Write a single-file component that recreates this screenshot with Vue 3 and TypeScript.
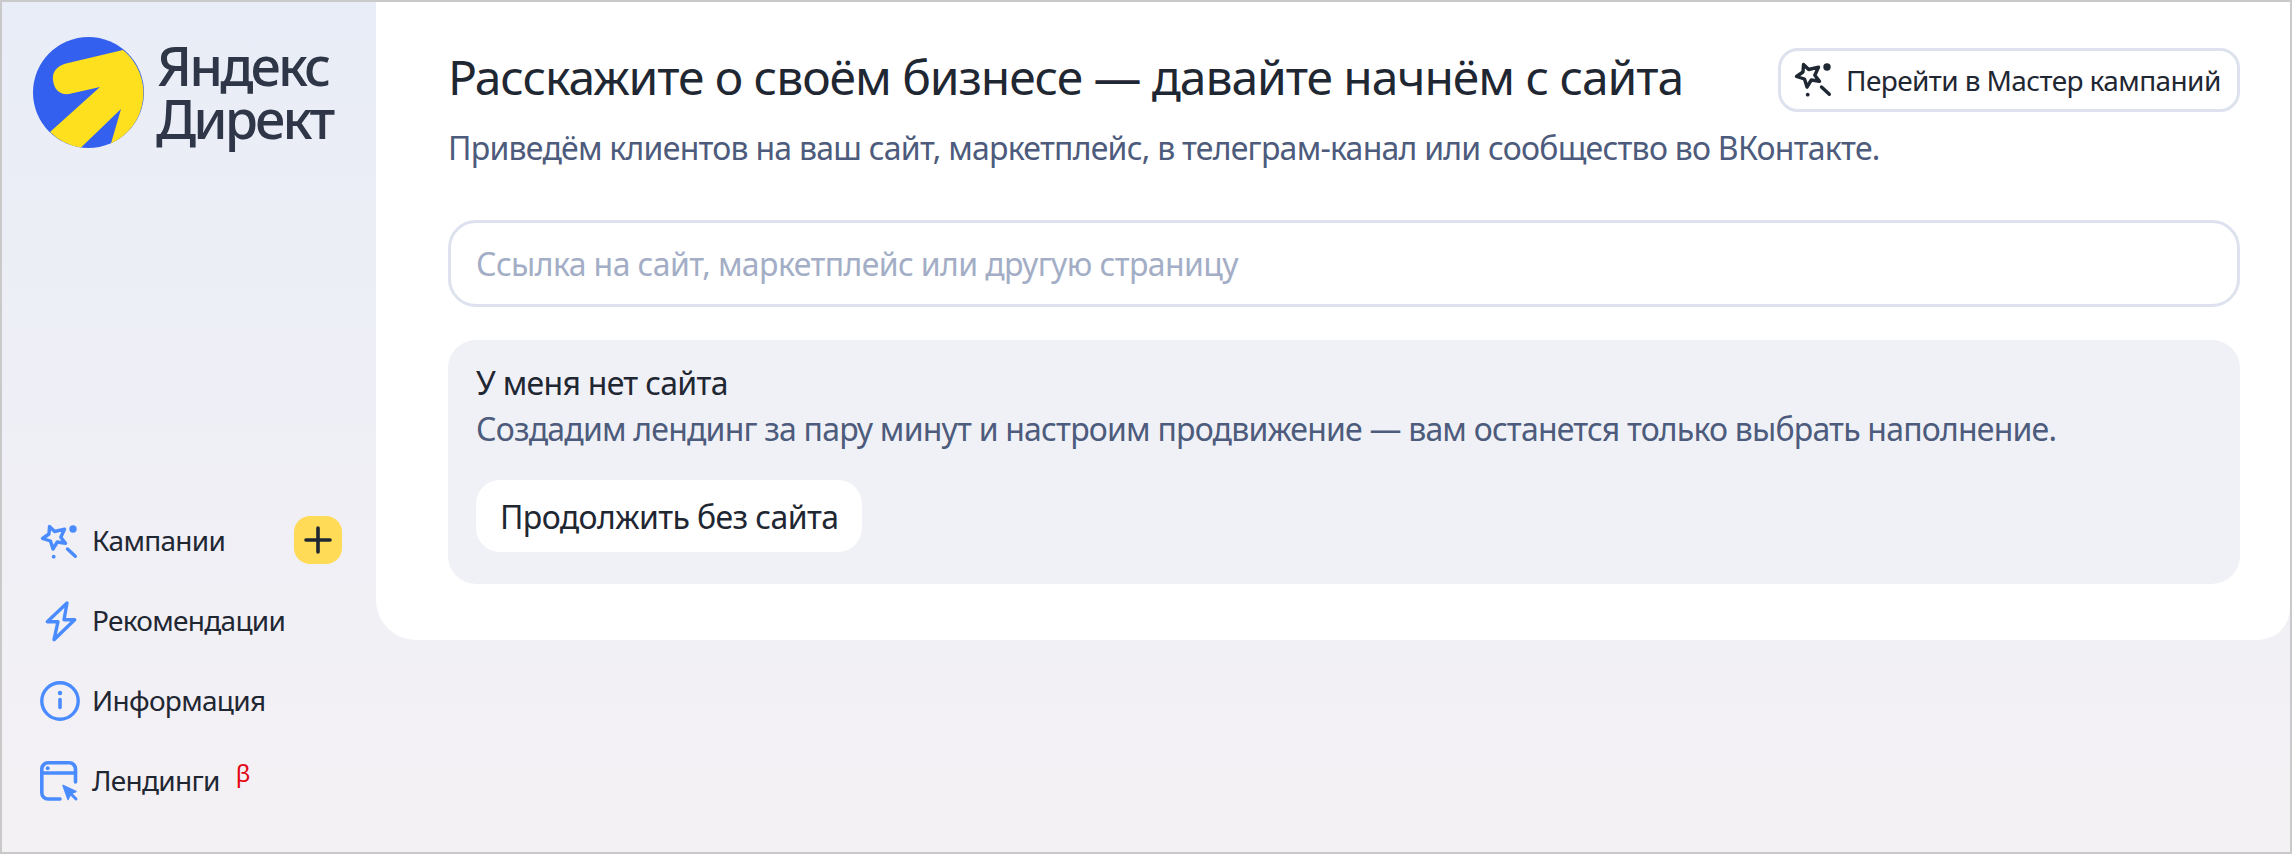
<script setup lang="ts">
interface NavItem {
  label: string;
  icon: 'wand' | 'bolt' | 'info' | 'landing';
  add?: boolean;
  beta?: boolean;
}

const navItems: NavItem[] = [
  { label: 'Кампании', icon: 'wand', add: true },
  { label: 'Рекомендации', icon: 'bolt' },
  { label: 'Информация', icon: 'info' },
  { label: 'Лендинги', icon: 'landing', beta: true },
];

const starPath = 'M11.5 7.5 L16.7 12.5 L26.5 10.2 L22.8 18.3 L27.5 24.3 L19.3 23 L15 30 L12.5 22 L4.5 19.5 L11 15 Z';
</script>

<template>
  <div class="frame">
    <aside class="sidebar">
      <div class="logo">
        <svg class="logo-mark" width="112" height="112" viewBox="33 37 112 112">
          <circle cx="88.5" cy="92.5" r="55.5" fill="#3360ee" />
          <path
            d="M123 50 L66 63.5 C57 66 52 72 53 80 C54 90 60 95 69 94 L100 87 L50 132 A55.5 55.5 0 0 0 81 147.5 L121 109 L111 143.5 A55.5 55.5 0 0 0 123 50 Z"
            fill="#ffe01f"
          />
        </svg>
        <div class="logo-text">
          <div>Яндекс</div>
          <div class="logo-second">Директ</div>
        </div>
      </div>

      <nav class="nav">
        <div v-for="item in navItems" :key="item.label" class="nav-item">
          <span class="nav-icon">
            <svg v-if="item.icon === 'wand'" width="46" height="46" viewBox="0 -2 46 46" fill="none" stroke="#4a8cff" stroke-width="3.4" stroke-linejoin="round" stroke-linecap="round">
              <path :d="starPath" />
              <circle cx="35" cy="10" r="3.7" fill="#4a8cff" stroke="none" />
              <circle cx="15.7" cy="37.7" r="1.9" fill="#4a8cff" stroke="none" />
              <path d="M29.5 30 L37.3 37.3" />
            </svg>
            <svg v-else-if="item.icon === 'bolt'" width="46" height="46" viewBox="0 -2 46 46" fill="none" stroke="#4a8cff" stroke-width="3.4" stroke-linejoin="round">
              <path d="M29 4 L9.3 22.7 L20 22.7 L16 40.7 L36.7 20.7 L26 20.7 Z" />
            </svg>
            <svg v-else-if="item.icon === 'info'" width="46" height="46" viewBox="0 0 46 46" fill="none" stroke="#4a8cff" stroke-width="3.4" stroke-linecap="round">
              <circle cx="22" cy="24" r="18.2" />
              <path d="M22 22.5 L22 30.5" stroke-width="3.6" />
              <circle cx="22" cy="16" r="2.2" fill="#4a8cff" stroke="none" />
            </svg>
            <svg v-else width="46" height="46" viewBox="0 0 46 46" fill="none" stroke="#4a8cff" stroke-width="3.6" stroke-linecap="round" stroke-linejoin="round">
              <path d="M22 42 L10 42 A6.2 6.2 0 0 1 3.8 35.8 L3.8 12 A6.2 6.2 0 0 1 10 5.8 L31.3 5.8 A6.2 6.2 0 0 1 37.5 12 L37.5 25" />
              <path d="M3.8 16 L37.5 16" />
              <circle cx="9.7" cy="11.2" r="2" fill="#4a8cff" stroke="none" />
              <path d="M25 28.5 L38 34.5 L33 36.5 L30 42.5 Z" fill="#4a8cff" stroke-width="1.4" />
              <path d="M33 37 L38 42" stroke-width="3" />
            </svg>
          </span>
          <span class="nav-label">{{ item.label }}</span>
          <sup v-if="item.beta" class="beta">β</sup>
          <span v-if="item.add" class="add-btn">
            <svg width="28" height="28" viewBox="0 0 28 28" stroke="#1f2733" stroke-width="3.6" stroke-linecap="round">
              <path d="M14 2 L14 26 M2 14 L26 14" />
            </svg>
          </span>
        </div>
      </nav>
    </aside>

    <main class="main">
      <section class="card">
        <header class="head">
          <h1 class="title">Расскажите о своём бизнесе — давайте начнём с сайта</h1>
          <button class="master-btn">
            <svg width="46" height="46" viewBox="0 0 46 46" fill="none" stroke="#1f2733" stroke-width="3.4" stroke-linejoin="round" stroke-linecap="round">
              <path :d="starPath" />
              <circle cx="35" cy="10" r="3.7" fill="#1f2733" stroke="none" />
              <circle cx="15.7" cy="37.7" r="1.9" fill="#1f2733" stroke="none" />
              <path d="M29.5 30 L37.3 37.3" />
            </svg>
            Перейти в Мастер кампаний
          </button>
        </header>
        <p class="subtitle">Приведём клиентов на ваш сайт, маркетплейс, в телеграм-канал или сообщество во ВКонтакте.</p>

        <input class="link-input" type="text" placeholder="Ссылка на сайт, маркетплейс или другую страницу" />

        <div class="no-site">
          <div class="no-site-title">У меня нет сайта</div>
          <div class="no-site-text">Создадим лендинг за пару минут и настроим продвижение — вам останется только выбрать наполнение.</div>
          <button class="continue-btn">Продолжить без сайта</button>
        </div>
      </section>
    </main>
  </div>
</template>

<style>
html, body {
  margin: 0;
}
</style>

<style scoped>
.frame {
  box-sizing: border-box;
  display: flex;
  height: 854px;
  border: 2px solid #c9c9c9;
  background: linear-gradient(180deg, #e9edf7 0%, #f4f1f4 100%);
  font-family: "Noto Sans", sans-serif;
  color: #1f2733;
  overflow: hidden;
}

.sidebar {
  flex: 0 0 374px;
  display: flex;
  flex-direction: column;
  justify-content: space-between;
}

.logo {
  display: flex;
  align-items: flex-start;
  gap: 12px;
  padding: 35px 0 0 31px;
}

.logo-text {
  margin-top: 2px;
  font-size: 54px;
  line-height: 53px;
  font-weight: 500;
  letter-spacing: -2.9px;
  color: #2e3648;
}

.logo-second {
  margin-left: -1px;
}

.nav {
  display: flex;
  flex-direction: column;
  padding: 0 0 32px 36px;
}

.nav-item {
  display: flex;
  align-items: center;
  height: 80px;
  font-size: 28px;
  letter-spacing: -0.7px;
}

.nav-icon {
  flex: 0 0 54px;
  display: flex;
  align-items: center;
}

.beta {
  margin: -14px 0 0 16px;
  font-size: 24px;
  line-height: 1;
  color: #e30613;
}

.add-btn {
  display: flex;
  align-items: center;
  justify-content: center;
  width: 48px;
  height: 48px;
  margin-left: auto;
  margin-right: 34px;
  border-radius: 16px;
  background: #ffdb58;
}

.main {
  flex: 1;
}

.card {
  box-sizing: border-box;
  display: flex;
  flex-direction: column;
  height: 638px;
  padding: 46px 50px 0 72px;
  background: #fff;
  border-radius: 0 0 32px 40px;
}

.head {
  display: flex;
  justify-content: space-between;
  align-items: flex-start;
}

.title {
  margin: -3px 0 0;
  font-size: 48px;
  line-height: 64px;
  font-weight: 400;
  letter-spacing: -1.08px;
  color: #1f2733;
}

.subtitle {
  margin: 16px 0 0;
  font-size: 32px;
  line-height: 40px;
  letter-spacing: -0.75px;
  color: #4d5b7c;
  white-space: nowrap;
}

.master-btn {
  display: flex;
  align-items: center;
  gap: 8px;
  box-sizing: border-box;
  width: 462px;
  height: 64px;
  padding: 0 15px 0 11px;
  background: #fff;
  border: 3px solid #dde2ee;
  border-radius: 20px;
  font: inherit;
  font-size: 28px;
  letter-spacing: -0.6px;
  color: #1f2733;
  white-space: nowrap;
  flex: none;
}

.link-input {
  box-sizing: border-box;
  width: 100%;
  height: 87px;
  margin-top: 52px;
  padding: 0 25px;
  border: 3px solid #dde2ee;
  border-radius: 28px;
  font: inherit;
  font-size: 32px;
  letter-spacing: -0.6px;
  outline: none;
}

.link-input::placeholder {
  color: #a3aec6;
}

.no-site {
  box-sizing: border-box;
  height: 244px;
  margin-top: 33px;
  padding: 23px 28px;
  background: #f0f1f6;
  border-radius: 28px;
}

.no-site-title {
  font-size: 32px;
  line-height: 40px;
  letter-spacing: -0.7px;
}

.no-site-text {
  margin-top: 6px;
  font-size: 32px;
  line-height: 40px;
  letter-spacing: -0.8px;
  color: #4d5b7c;
}

.continue-btn {
  height: 72px;
  margin-top: 31px;
  padding: 0 24px;
  background: #fff;
  border: 0;
  border-radius: 24px;
  font: inherit;
  font-size: 32px;
  letter-spacing: -0.6px;
  color: #1f2733;
}
</style>
